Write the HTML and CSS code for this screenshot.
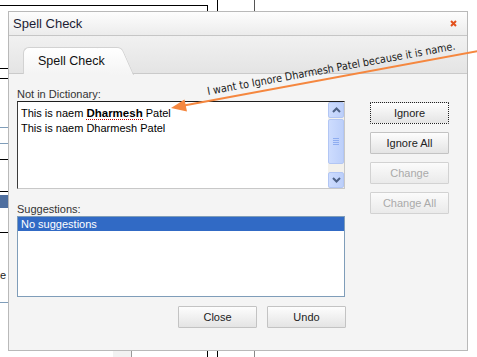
FILE: index.html
```html
<!DOCTYPE html>
<html lang="en">
  <head>
    <meta charset="UTF-8" />
    <title>Spell Check</title>
    <link rel="stylesheet" href="styles.css">
  </head>
  <body>
    <!-- page that sits behind the dialog -->
    <svg class="backdrop" width="477" height="357" shape-rendering="crispEdges">
      <line x1="0" y1="5.5" x2="207.5" y2="5.5" stroke="#000" />
      <line x1="207.5" y1="5" x2="207.5" y2="12" stroke="#000" />
      <line x1="217.5" y1="0" x2="217.5" y2="12" stroke="#000" />
      <line x1="254.5" y1="0" x2="254.5" y2="12" stroke="#555" />
      <line x1="0" y1="68.5" x2="9" y2="68.5" stroke="#000" />
      <line x1="0" y1="78.5" x2="9" y2="78.5" stroke="#000" />
      <line x1="0" y1="127.5" x2="9" y2="127.5" stroke="#7f9db9" />
      <line x1="0" y1="143.5" x2="9" y2="143.5" stroke="#7f9db9" />
      <line x1="0" y1="159.5" x2="9" y2="159.5" stroke="#000" />
      <line x1="0" y1="191.5" x2="9" y2="191.5" stroke="#000" />
      <rect x="0" y="195" width="9" height="13" fill="#4f6f9f" />
      <line x1="0" y1="232.5" x2="9" y2="232.5" stroke="#000" />
      <text x="0" y="279" class="backdrop-text">e</text>
      <line x1="0" y1="302.5" x2="9" y2="302.5" stroke="#7f9db9" />
      <rect x="113" y="351" width="18" height="6" fill="#f2f2f2" />
      <line x1="131.5" y1="351" x2="131.5" y2="357" stroke="#999" />
      <line x1="207.5" y1="351" x2="207.5" y2="357" stroke="#000" />
      <line x1="217.5" y1="351" x2="217.5" y2="357" stroke="#000" />
      <line x1="254.5" y1="351" x2="254.5" y2="357" stroke="#888" />
    </svg>

    <div class="dialog">
      <div class="titlebar">
        <span class="title">Spell Check</span>
        <svg class="close" width="7" height="7" viewBox="0 0 7 7">
          <path d="M1 1 L6 6 M6 1 L1 6" stroke="#e2501c" stroke-width="2" />
        </svg>
      </div>

      <div class="tabstrip">
        <div class="tab">Spell Check</div>
      </div>

      <div class="panel">
        <div class="fields">
          <div class="field-label">Not in Dictionary:</div>
          <div class="sentence-box">
            <div class="sentence-text">
              <div>This is naem <span class="misspelled">Dharmesh</span> Patel</div>
              <div>This is naem Dharmesh Patel</div>
            </div>
            <div class="scrollbar">
              <div class="sb-btn">
                <svg width="9" height="6" viewBox="0 0 9 6"><path d="M1 5 L4.5 1.5 L8 5" fill="none" stroke="#4d6185" stroke-width="2" /></svg>
              </div>
              <div class="sb-thumb">
                <svg width="6" height="7" viewBox="0 0 6 7" shape-rendering="crispEdges">
                  <path d="M0 0.5 H6 M0 2.5 H6 M0 4.5 H6 M0 6.5 H6" stroke="#8fadf0" />
                </svg>
              </div>
              <div class="sb-track"></div>
              <div class="sb-btn">
                <svg width="9" height="6" viewBox="0 0 9 6"><path d="M1 1 L4.5 4.5 L8 1" fill="none" stroke="#4d6185" stroke-width="2" /></svg>
              </div>
            </div>
          </div>

          <div class="field-label suggest-label">Suggestions:</div>
          <div class="suggest-box">
            <div class="suggest-item selected">No suggestions</div>
          </div>

          <div class="bottom-buttons">
            <button class="btn">Close</button>
            <button class="btn">Undo</button>
          </div>
        </div>

        <div class="side-buttons">
          <button class="btn focused">Ignore</button>
          <button class="btn">Ignore All</button>
          <button class="btn" disabled>Change</button>
          <button class="btn" disabled>Change All</button>
        </div>
      </div>
    </div>

    <!-- note drawn over the screenshot -->
    <svg class="annotation" width="477" height="357">
      <line x1="478" y1="51" x2="184" y2="105.5" stroke="#f5873f" stroke-width="2" />
      <polygon points="171,108 187,111.5 184.5,99.5" fill="#f5873f" />
      <text class="note" x="208" y="95" transform="rotate(-10.4 208 95)" textLength="252" lengthAdjust="spacingAndGlyphs">I want to Ignore Dharmesh Patel because it is name.</text>
    </svg>
  </body>
</html>
```

FILE: styles.css
```css
body {
  margin: 0;
  width: 477px;
  height: 357px;
  position: relative;
  overflow: hidden;
  background: #fff;
  font-family: "Liberation Sans", Arial, sans-serif;
}
.backdrop,
.annotation {
  position: absolute;
  left: 0;
  top: 0;
}
.annotation {
  pointer-events: none;
}
.backdrop-text {
  font-family: "Liberation Sans", Arial, sans-serif;
  font-size: 11px;
  fill: #222;
}
.note {
  font-family: "DejaVu Sans", Verdana, sans-serif;
  font-size: 11px;
  fill: #1a1a1a;
}
.dialog {
  position: absolute;
  left: 8px;
  top: 11px;
  width: 458px;
  height: 338px;
  border: 1px solid #b9b9b9;
  background: #f4f4f4;
  display: flex;
  flex-direction: column;
}
.titlebar {
  height: 24px;
  box-sizing: border-box;
  border-bottom: 1px solid #c6c6c6;
  background: linear-gradient(#fdfdfd, #ececec);
  display: flex;
  align-items: center;
  justify-content: space-between;
  padding: 0 10px 0 4px;
  font-size: 13px;
  color: #1c1c34;
}
.tabstrip {
  height: 38px;
  box-sizing: border-box;
  padding: 11px 0 0 14px;
  background: linear-gradient(#f1f1f1, #e4e4e4);
  border-bottom: 1px solid #cacaca;
  display: flex;
  align-items: flex-end;
}
.tab {
  position: relative;
  z-index: 1;
  width: 92px;
  height: 27px;
  box-sizing: border-box;
  margin-bottom: -1px;
  padding-left: 14px;
  line-height: 26px;
  font-size: 12.5px;
  color: #111;
  background: linear-gradient(#ffffff, #f4f4f4);
  border: 1px solid #d2d2d2;
  border-bottom: none;
  border-right: none;
  border-radius: 6px 0 0 0;
}
.tab::after {
  content: "";
  position: absolute;
  z-index: -1;
  top: -1px;
  left: 79px;
  width: 24px;
  height: 27px;
  background: linear-gradient(#ffffff, #f4f4f4);
  border-top: 1px solid #d2d2d2;
  border-right: 1px solid #d2d2d2;
  border-radius: 0 5px 0 0;
  transform: skewX(24deg);
}
.panel {
  flex: 1;
  display: flex;
  gap: 25px;
  padding: 14px 0 0 8px;
}
.fields {
  width: 328px;
  display: flex;
  flex-direction: column;
}
.field-label {
  font-size: 11px;
  line-height: 13px;
  color: #333;
}
.suggest-label {
  margin-top: 14px;
}
.sentence-box {
  height: 88px;
  box-sizing: border-box;
  border: 1px solid;
  border-color: #1e1e1e #c8c8c8 #c8c8c8 #3a3a3a;
  background: #fff;
  display: flex;
}
.sentence-text {
  flex: 1;
  padding: 4px 3px;
  font-size: 11px;
  line-height: 15px;
  color: #000;
}
.misspelled {
  font-weight: bold;
  font-size: 11.5px;
  border-bottom: 1px dotted #c00000;
}
.scrollbar {
  width: 16px;
  display: flex;
  flex-direction: column;
  background: #f3f1ec;
}
.sb-btn,
.sb-thumb {
  box-sizing: border-box;
  border: 1px solid #b2c6f4;
  border-radius: 2px;
  background: linear-gradient(90deg, #cddcfe, #bccffa);
  display: flex;
  align-items: center;
  justify-content: center;
}
.sb-btn {
  height: 16px;
}
.sb-thumb {
  height: 45px;
  margin-top: 1px;
}
.sb-track {
  flex: 1;
}
.suggest-box {
  height: 81px;
  box-sizing: border-box;
  border: 1px solid #7f9db9;
  background: #fff;
}
.suggest-item {
  font-size: 11px;
  line-height: 14px;
  padding-left: 3px;
}
.suggest-item.selected {
  background: #316ac5;
  color: #fff;
}
.bottom-buttons {
  margin-top: 9px;
  margin-right: -1px;
  display: flex;
  justify-content: flex-end;
  gap: 10px;
}
.side-buttons {
  width: 79px;
  display: flex;
  flex-direction: column;
  gap: 8px;
  padding-top: 14px;
}
.btn {
  width: 79px;
  height: 22px;
  box-sizing: border-box;
  padding: 0;
  border: 1px solid #c3c3c3;
  border-radius: 1px;
  background: linear-gradient(#fdfdfd, #e4e4e4);
  font-family: "Liberation Sans", Arial, sans-serif;
  font-size: 11px;
  color: #222;
}
.btn.focused {
  border: 1px dotted #222;
}
.btn:disabled {
  color: #aaa;
  border-color: #d2d2d2;
  background: linear-gradient(#fbfbfb, #eaeaea);
}
```
